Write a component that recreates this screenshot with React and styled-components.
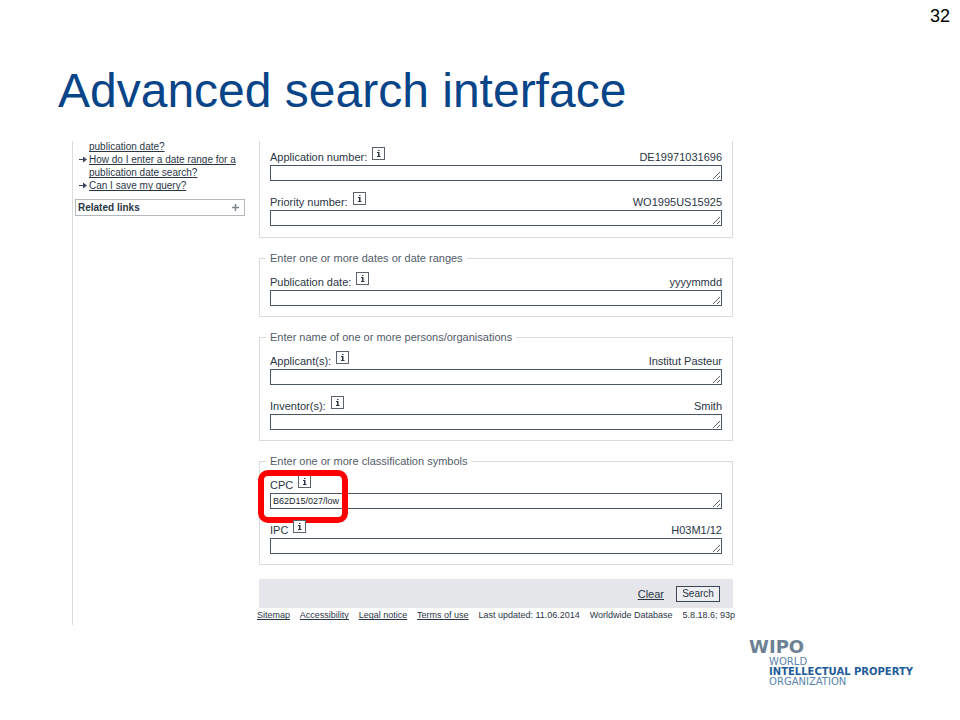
import React, { useState } from "react";
import styled, { createGlobalStyle, css } from "styled-components";

const GlobalStyle = createGlobalStyle`
  *,
  *::after {
    box-sizing: border-box;
  }
  body {
    margin: 0;
    background: #ffffff;
    font-family: "Liberation Sans", Arial, sans-serif;
  }
`;

const groups = [
  {
    legend: "",
    fields: [
      { id: "application", label: "Application number:", hint: "DE19971031696" },
      { id: "priority", label: "Priority number:", hint: "WO1995US15925" },
    ],
  },
  {
    legend: "Enter one or more dates or date ranges",
    fields: [{ id: "publication", label: "Publication date:", hint: "yyyymmdd" }],
  },
  {
    legend: "Enter name of one or more persons/organisations",
    fields: [
      { id: "applicant", label: "Applicant(s):", hint: "Institut Pasteur" },
      { id: "inventor", label: "Inventor(s):", hint: "Smith" },
    ],
  },
  {
    legend: "Enter one or more classification symbols",
    fields: [
      { id: "cpc", label: "CPC", hint: "", marked: true },
      { id: "ipc", label: "IPC", hint: "H03M1/12" },
    ],
  },
];

const helpLinks = [
  { text: "publication date?", arrow: false },
  { text: "How do I enter a date range for a publication date search?", arrow: true },
  { text: "Can I save my query?", arrow: true },
];

const footerLinks = ["Sitemap", "Accessibility", "Legal notice", "Terms of use"];
const footerNotes = ["Last updated: 11.06.2014", "Worldwide Database", "5.8.18.6; 93p"];

const emptyQuery = {
  application: "",
  priority: "",
  publication: "",
  applicant: "",
  inventor: "",
  cpc: "",
  ipc: "",
};

const Arrow = () => (
  <svg width="8" height="7" viewBox="0 0 8 7" aria-hidden="true">
    <path d="M0 3.5H6" stroke="#3a4657" strokeWidth="1" />
    <path d="M4 0.5L8 3.5L4 6.5Z" fill="#3a4657" />
  </svg>
);

const InfoIcon = () => (
  <svg width="11" height="11" viewBox="0 0 11 11" aria-hidden="true">
    <path d="M5 2H6.5V3H5ZM4 4H6.5V8H7.5V9H4V8H5V5H4Z" fill="#2b3646" />
  </svg>
);

const PlusIcon = () => (
  <svg width="7" height="7" viewBox="0 0 7 7" aria-hidden="true">
    <path d="M0 3.5H7M3.5 0V7" stroke="#7d858f" strokeWidth="1.5" />
  </svg>
);

const SearchField = ({ field, value, onChange }) => (
  <Field $marked={field.marked}>
    <FieldHead>
      <FieldLabel htmlFor={field.id}>{field.label}</FieldLabel>
      <InfoButton type="button" aria-label="Help">
        <InfoIcon />
      </InfoButton>
      <Hint>{field.hint}</Hint>
    </FieldHead>
    <FieldInput
      id={field.id}
      name={field.id}
      rows={1}
      spellCheck={false}
      value={value}
      onChange={onChange}
    />
  </Field>
);

const App = () => {
  const [query, setQuery] = useState({ ...emptyQuery, cpc: "B62D15/027/low" });

  const handleChange = (e) => {
    setQuery({ ...query, [e.target.name]: e.target.value });
  };
  const handleClear = (e) => {
    e.preventDefault();
    setQuery(emptyQuery);
  };
  const handleSubmit = (e) => {
    e.preventDefault();
  };

  return (
    <Slide>
      <GlobalStyle />
      <PageNumber>32</PageNumber>
      <Title>Advanced search interface</Title>
      <Panel>
        <Sidebar>
          <HelpList>
            {helpLinks.map((link) => (
              <HelpItem key={link.text}>
                <ArrowSlot>{link.arrow ? <Arrow /> : null}</ArrowSlot>
                <a href="#help">{link.text}</a>
              </HelpItem>
            ))}
          </HelpList>
          <RelatedButton type="button">
            Related links
            <PlusIcon />
          </RelatedButton>
        </Sidebar>
        <main>
          <SearchForm onSubmit={handleSubmit}>
            {groups.map((group) => (
              <Group key={group.fields[0].id} $open={!group.legend}>
                {group.legend ? <Legend>{group.legend}</Legend> : null}
                <FieldList>
                  {group.fields.map((field) => (
                    <SearchField
                      key={field.id}
                      field={field}
                      value={query[field.id]}
                      onChange={handleChange}
                    />
                  ))}
                </FieldList>
              </Group>
            ))}
            <Actions>
              <ClearLink href="#clear" onClick={handleClear}>
                Clear
              </ClearLink>
              <SearchButton type="submit">Search</SearchButton>
            </Actions>
          </SearchForm>
          <FormFooter>
            {footerLinks.map((text) => (
              <a key={text} href="#info">
                {text}
              </a>
            ))}
            {footerNotes.map((text) => (
              <span key={text}>{text}</span>
            ))}
          </FormFooter>
        </main>
      </Panel>
      <Logo>
        <LogoName>WIPO</LogoName>
        <LogoLines>
          <span>WORLD</span>
          <strong>INTELLECTUAL PROPERTY</strong>
          <span>ORGANIZATION</span>
        </LogoLines>
      </Logo>
    </Slide>
  );
};

export default App;

const Slide = styled.div`
  display: flex;
  flex-direction: column;
  min-height: 100vh;
`;

const PageNumber = styled.div`
  padding: 0 10px;
  font-size: 18px;
  line-height: 32px;
  text-align: right;
  color: #000000;
`;

const Title = styled.h1`
  margin: 31px 58px 22px;
  font-size: 48px;
  font-weight: 400;
  line-height: 56px;
  color: #084488;
`;

const Panel = styled.div`
  display: grid;
  grid-template-columns: 174px 1fr;
  column-gap: 13px;
  max-width: 661px;
  margin-left: 72px;
  color: #2b3646;
`;

const Sidebar = styled.aside`
  padding-left: 2px;
  border-left: 1px solid #dcdcdc;
`;

const HelpList = styled.ul`
  margin: -1px 0 7px;
  padding: 0 0 0 4px;
  list-style: none;
  font-size: 10px;
  line-height: 13px;
`;

const HelpItem = styled.li`
  display: flex;
  a {
    color: inherit;
    text-decoration-skip-ink: none;
  }
`;

const ArrowSlot = styled.span`
  display: flex;
  flex: none;
  align-items: center;
  width: 10px;
  height: 13px;
`;

const RelatedButton = styled.button`
  display: flex;
  align-items: center;
  justify-content: space-between;
  width: 170px;
  height: 17px;
  padding: 0 5px 0 2px;
  border: 1px solid #b4b7bb;
  background: #ffffff;
  font-family: inherit;
  font-size: 10px;
  font-weight: 700;
  color: inherit;
`;

const SearchForm = styled.form`
  display: flex;
  flex-direction: column;
  gap: 14px;
`;

const Group = styled.fieldset`
  min-width: 0;
  margin: 0;
  padding: 8px 10px 10px;
  border: 1px solid #d9dadc;
  ${(props) =>
    props.$open &&
    css`
      padding: 6px 10px 11px;
      border-top: none;
    `}
`;

const Legend = styled.legend`
  margin-left: -4px;
  padding: 0 4px;
  font-size: 11px;
  line-height: 12px;
  color: #525c69;
`;

const FieldList = styled.div`
  display: flex;
  flex-direction: column;
  gap: 11px;
`;

const Field = styled.div`
  position: relative;
  ${(props) =>
    props.$marked &&
    css`
      &::after {
        content: "";
        position: absolute;
        top: -5px;
        left: -12px;
        width: 90px;
        height: 53px;
        border: 6px solid #fe0000;
        border-radius: 10px;
        pointer-events: none;
      }
    `}
`;

const FieldHead = styled.div`
  display: flex;
  align-items: flex-end;
  height: 18px;
  font-size: 11px;
  line-height: 16px;
`;

const FieldLabel = styled.label`
  margin-right: 5px;
`;

const InfoButton = styled.button`
  display: flex;
  align-self: flex-start;
  width: 13px;
  height: 13px;
  padding: 0;
  border: 1px solid #59626e;
  background: #ffffff;
`;

const Hint = styled.span`
  margin-left: auto;
`;

const FieldInput = styled.textarea`
  display: block;
  width: 100%;
  height: 16px;
  padding: 1px 2px;
  border: 1px solid #4a5565;
  border-radius: 0;
  outline: none;
  background: #ffffff;
  font-family: inherit;
  font-size: 9px;
  line-height: 12px;
  color: #1c2430;
  overflow: hidden;
  resize: vertical;
`;

const Actions = styled.div`
  display: flex;
  align-items: center;
  justify-content: flex-end;
  gap: 12px;
  height: 29px;
  padding-right: 13px;
  background: #e4e6ea;
`;

const ClearLink = styled.a`
  font-size: 11px;
  color: inherit;
`;

const SearchButton = styled.button`
  width: 44px;
  height: 16px;
  padding: 0;
  border: 1px solid #3a4657;
  background: #eceef1;
  font-family: inherit;
  font-size: 10px;
  line-height: 14px;
  color: inherit;
`;

const FormFooter = styled.footer`
  display: flex;
  justify-content: space-between;
  margin: 0 -2px;
  padding-bottom: 3px;
  font-size: 9px;
  line-height: 14px;
  white-space: nowrap;
  a {
    color: inherit;
    text-decoration-skip-ink: none;
  }
`;

const Logo = styled.div`
  align-self: flex-end;
  margin: 11px 47px 0 0;
  font-family: "DejaVu Sans", sans-serif;
`;

const LogoName = styled.div`
  font-size: 18px;
  font-weight: 700;
  line-height: 21px;
  color: #6c8294;
`;

const LogoLines = styled.div`
  display: flex;
  flex-direction: column;
  padding-left: 20px;
  font-size: 10px;
  line-height: 10px;
  color: #5a84ab;
  strong {
    color: #1f5c99;
  }
`;
